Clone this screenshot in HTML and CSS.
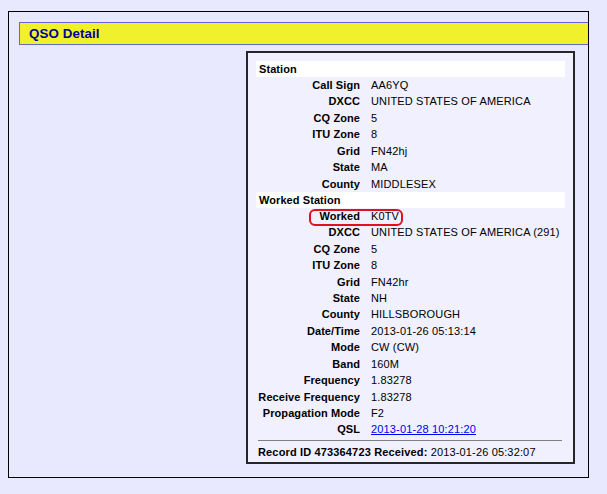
FILE: index.html
```html
<!DOCTYPE html>
<html>
<head>
<meta charset="utf-8">
<link rel="stylesheet" href="styles.css">
</head>
<body>
<div class="outer">
  <div class="title-bar"><span class="title">QSO Detail</span></div>
  <div class="content">
    <div class="detail">
      <div class="grid">
        <div class="section">Station</div>
        <div class="lbl">Call Sign</div><div class="val">AA6YQ</div>
        <div class="lbl">DXCC</div><div class="val">UNITED STATES OF AMERICA</div>
        <div class="lbl">CQ Zone</div><div class="val">5</div>
        <div class="lbl">ITU Zone</div><div class="val">8</div>
        <div class="lbl">Grid</div><div class="val">FN42hj</div>
        <div class="lbl">State</div><div class="val">MA</div>
        <div class="lbl">County</div><div class="val">MIDDLESEX</div>
        <div class="section">Worked Station</div>
        <div class="lbl">Worked</div><div class="val">K0TV</div>
        <div class="lbl">DXCC</div><div class="val">UNITED STATES OF AMERICA (291)</div>
        <div class="lbl">CQ Zone</div><div class="val">5</div>
        <div class="lbl">ITU Zone</div><div class="val">8</div>
        <div class="lbl">Grid</div><div class="val">FN42hr</div>
        <div class="lbl">State</div><div class="val">NH</div>
        <div class="lbl">County</div><div class="val">HILLSBOROUGH</div>
        <div class="lbl">Date/Time</div><div class="val">2013-01-26 05:13:14</div>
        <div class="lbl">Mode</div><div class="val">CW (CW)</div>
        <div class="lbl">Band</div><div class="val">160M</div>
        <div class="lbl">Frequency</div><div class="val">1.83278</div>
        <div class="lbl">Receive Frequency</div><div class="val">1.83278</div>
        <div class="lbl">Propagation Mode</div><div class="val">F2</div>
        <div class="lbl">QSL</div><div class="val"><a href="#" class="link">2013-01-28 10:21:20</a></div>
      </div>
      <div class="rule"></div>
      <div class="record"><b>Record ID 473364723 Received:</b> 2013-01-26 05:32:07</div>
      <div class="highlight"></div>
    </div>
  </div>
</div>
</body>
</html>
```

FILE: styles.css
```css
html, body {
  margin: 0;
  padding: 0;
  background: #e8e8ff;
  font-family: "Liberation Sans", Arial, sans-serif;
  font-size: 11px;
  color: #000;
}
body {
  padding: 11px 0 0 8px;
}
.outer {
  border: 1px solid #000;
  overflow: hidden;
  padding: 10px 0 0 10px;
  box-sizing: border-box;
  width: 581px;
  height: 467px;
}
.title-bar {
  height: 23px;
  box-sizing: border-box;
  background: #f0f02c;
  border: 1px solid #6666cc;
  margin-right: -4px;
  display: flex;
  align-items: center;
  padding-left: 9px;
}
.title {
  font-size: 13.33px;
  font-weight: bold;
  color: #000099;
  letter-spacing: 0.1px;
}
.content {
  display: flex;
  justify-content: flex-end;
  padding-top: 6px;
  padding-right: 13px;
}
.detail {
  position: relative;
  width: 329px;
  box-sizing: border-box;
  border: 2px solid #262626;
  background: #f0f0fe;
  padding: 8px 8px 2px 8px;
}
.grid {
  display: grid;
  grid-template-columns: 104px 1fr;
}
.section {
  grid-column: 1 / 3;
  background: #fff;
  font-weight: bold;
  height: 16px;
  line-height: 16px;
  padding-left: 3px;
  letter-spacing: 0.08px;
}
.lbl {
  font-weight: bold;
  text-align: right;
  height: 16.43px;
  line-height: 16.43px;
  white-space: nowrap;
  letter-spacing: 0.08px;
}
.val {
  height: 16.43px;
  line-height: 16.43px;
  padding-left: 11px;
  white-space: nowrap;
  letter-spacing: 0.15px;
}
.link {
  color: #0000ee;
  text-decoration: underline;
}
.rule {
  height: 1px;
  background: #808080;
  margin: 2px 3px 0 2px;
}
.record {
  margin-top: 3px;
  height: 16.43px;
  line-height: 16.43px;
  padding-left: 2px;
  white-space: nowrap;
  letter-spacing: 0.15px;
}
.highlight {
  position: absolute;
  left: 61px;
  top: 156px;
  width: 94px;
  height: 17px;
  box-sizing: border-box;
  border: 2px solid #e0101c;
  border-radius: 6px;
}
```
